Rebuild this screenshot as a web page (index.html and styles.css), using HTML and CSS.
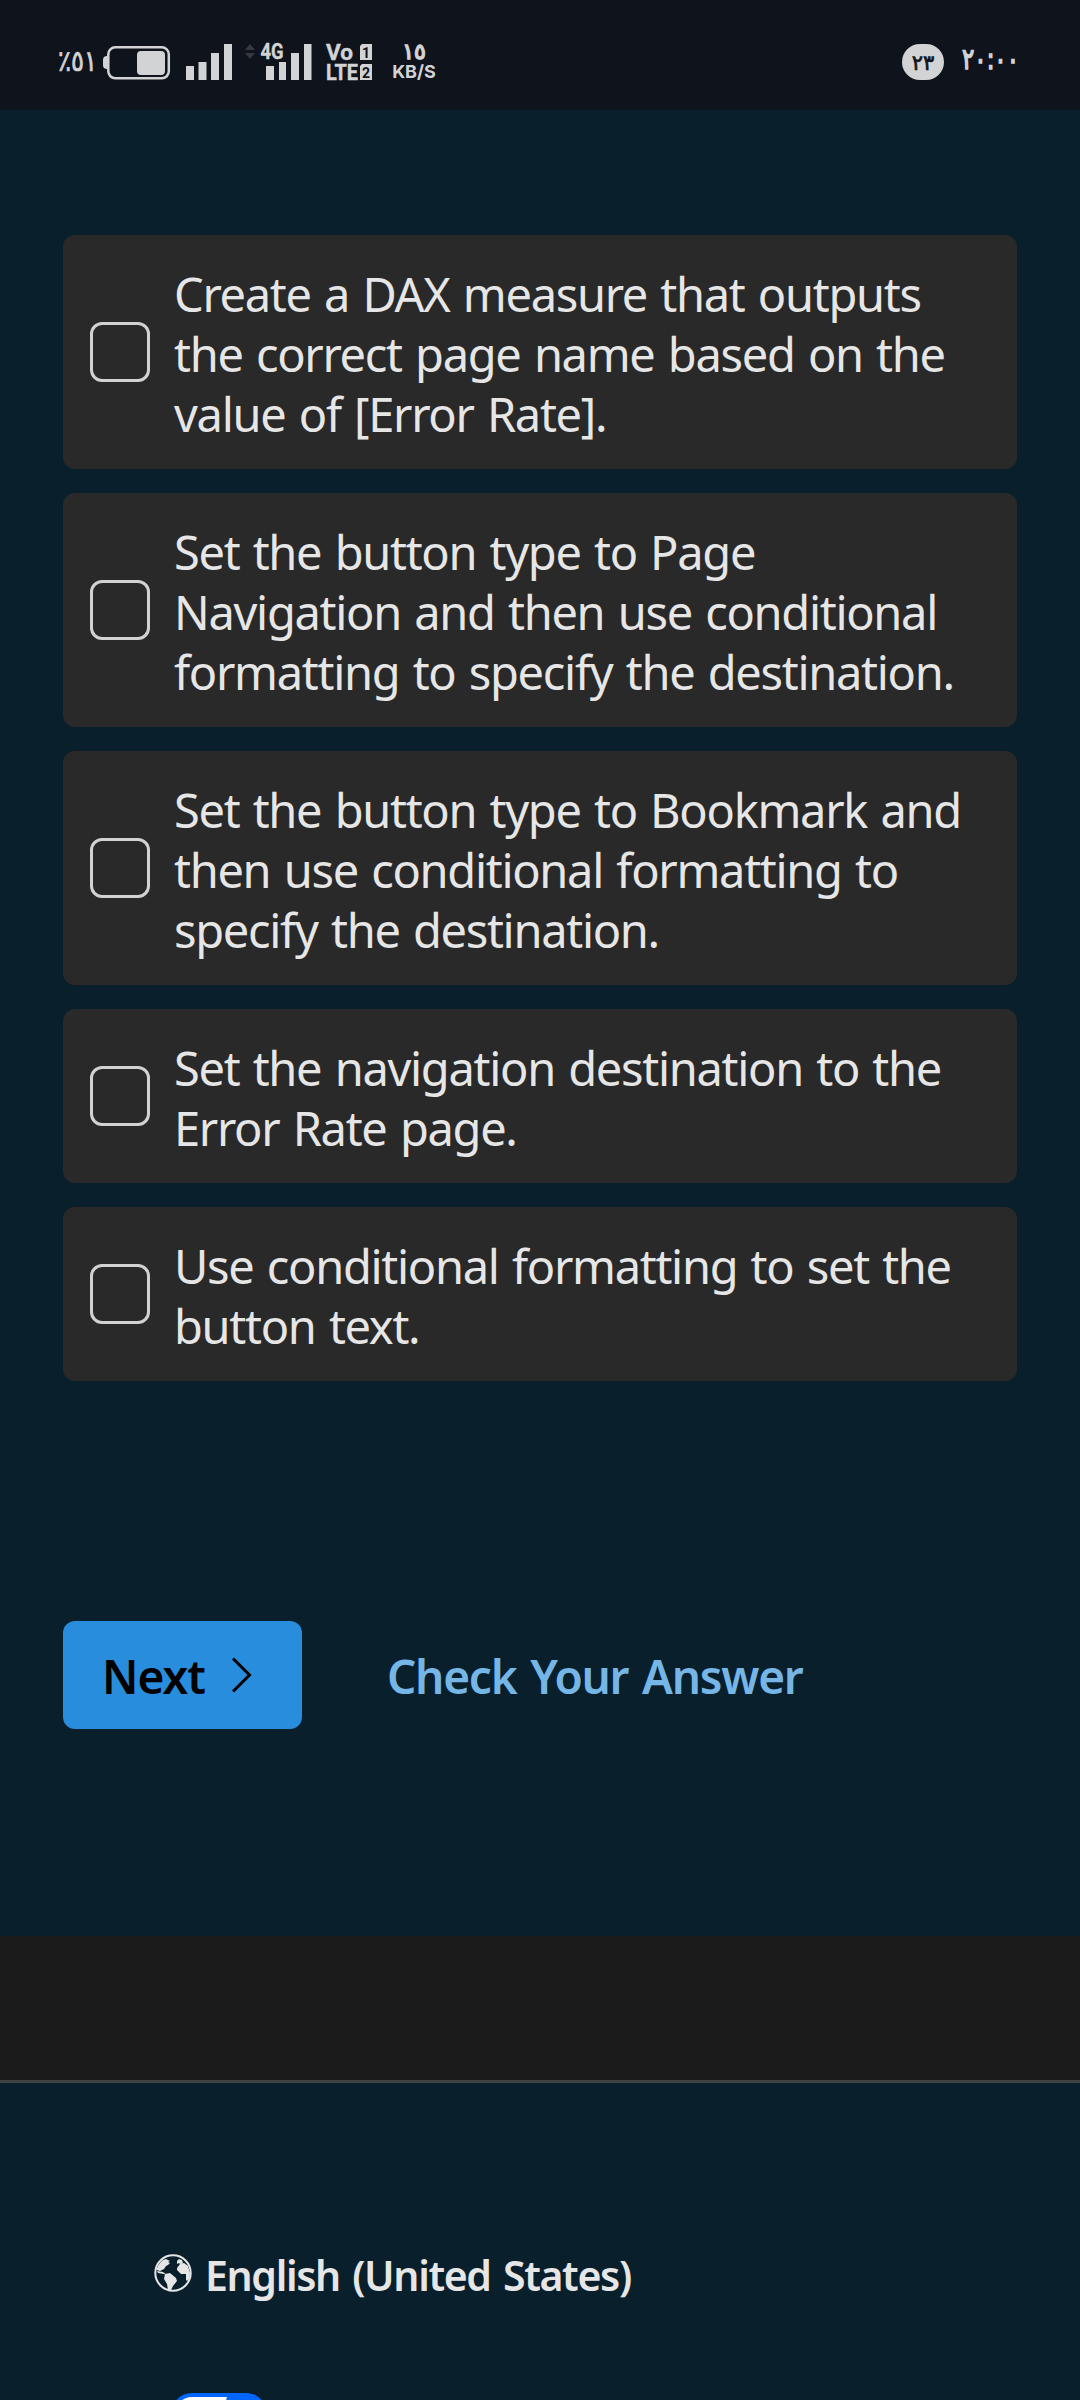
FILE: index.html
```html
<!DOCTYPE html>
<html lang="en">
<head>
<meta charset="utf-8">
<title>Practice assessment</title>
<link rel="stylesheet" href="styles.css">
</head>
<body>
<header class="status">
  <div class="status-left">
    <svg class="battery-text" width="45" height="36" viewBox="0 0 45 36"><text class="digits thin" x="0" y="27" textLength="39" lengthAdjust="spacingAndGlyphs">٪٥١</text></svg>
    <svg class="battery" width="68" height="36" viewBox="0 0 68 36"><path class="fill" d="M5 11v13H4q-4 0-4-4v-5q0-4 4-4z"/><rect class="outline" x="5.300" y="2.300" width="60.500" height="31" rx="7"/><rect class="fill" x="34" y="6" width="28" height="24" rx="4"/></svg>
    <svg class="signal" width="46" height="36" viewBox="0 0 46 36"><path class="fill" d="M0 22h8v14H0zM12.500 18h8v18h-8zM25 9h8v27h-8zM38 0h8v36h-8z"/></svg>
    <svg class="signal mobile" width="68" height="38" viewBox="0 0 68 38"><path class="dim" d="M0 8l5-6 5 6zM0 11l5 6 5-6z"/><text class="net" x="15.500" y="17" textLength="23" lengthAdjust="spacingAndGlyphs">4G</text><path class="fill" d="M21 24h8v14h-8zM34 20h7v18h-7zM46 11h8v27h-8zM59 2h7.500v36H59z"/></svg>
    <svg class="volte" width="46" height="38" viewBox="0 0 46 38"><text class="net" x="0" y="17.500" textLength="27" lengthAdjust="spacingAndGlyphs">Vo</text><text class="net" x="0" y="37.500" textLength="32" lengthAdjust="spacingAndGlyphs">LTE</text><path class="fill" d="M36 2h10v16H34V4zM36 22h10v16H34V24z"/><text class="sim" x="36" y="15.500">1</text><text class="sim" x="36" y="35.500">2</text></svg>
    <div class="speed"><span class="speed-value">١٥</span><span class="speed-unit">KB/S</span></div>
  </div>
  <div class="status-right">
    <span class="badge">٢٣</span>
    <svg class="clock" width="52" height="36" viewBox="0 0 52 36"><text class="digits" x="-2" y="26" textLength="57" lengthAdjust="spacingAndGlyphs">٢٠:٠٠</text></svg>
  </div>
</header>
<main class="quiz">
  <ul class="answers">
    <li class="answer"><span class="box"></span><p class="label"><span class="line">Create a DAX measure that outputs</span><span class="line">the correct page name based on the</span><span class="line">value of [Error Rate].</span></p></li>
    <li class="answer"><span class="box"></span><p class="label"><span class="line">Set the button type to Page</span><span class="line">Navigation and then use conditional</span><span class="line">formatting to specify the destination.</span></p></li>
    <li class="answer"><span class="box"></span><p class="label"><span class="line">Set the button type to Bookmark and</span><span class="line">then use conditional formatting to</span><span class="line">specify the destination.</span></p></li>
    <li class="answer"><span class="box"></span><p class="label"><span class="line">Set the navigation destination to the</span><span class="line">Error Rate page.</span></p></li>
    <li class="answer"><span class="box"></span><p class="label"><span class="line">Use conditional formatting to set the</span><span class="line">button text.</span></p></li>
  </ul>
  <div class="actions">
    <button class="next"><span class="next-text">Next</span><svg width="22" height="36" viewBox="0 0 22 36"><path class="chevron" d="M2 1.500L18.500 18 2 34.500"/></svg></button>
    <a class="check">Check Your Answer</a>
  </div>
</main>
<div class="band"></div>
<footer class="footer">
  <a class="locale"><svg class="globe" width="38" height="38" viewBox="0 0 38 38"><circle class="ring" cx="19" cy="19" r="17.700"/><path class="land" d="M2.500 16Q4 10 9 6l3-1 4 2-2 1 2 1-2 2-2 1-2 3-4 2zM23 7l2-2 3 1 1 3-3 1-1-1-2 1zM23 14l3-4 4-1 4 3 2 7q0 6-3 8l-1-1 0-6-5 0-4-4zM3 17l6 1 4 3-3-1-6-1zM11 20l5-1 6 5 1 3-4 5-2 4-3 0-1-6-3-5z"/></svg><span class="locale-text">English (United States)</span></a>
  <svg class="privacy" width="96" height="42" viewBox="0 0 96 42"><rect class="pill" width="96" height="42" rx="21"/><path class="pill-half" d="M56 4H21a17 17 0 0 0 0 34h25z"/></svg>
</footer>
</body>
</html>
```
FILE: styles.css
```css
* { box-sizing: border-box; }
body { margin: 0; width: 1080px; height: 2400px; overflow: hidden; background: #091f2b; color: #e6e6e6; font-family: "Noto Sans", sans-serif; }
svg { overflow: visible; flex: none; }
.status { height: 110px; background: #0f141c; color: #d2d3d5; display: flex; justify-content: space-between; padding: 0 64px 0 58px; }
.status-left { display: flex; align-items: flex-start; }
.status-right { display: flex; align-items: flex-start; }
.fill { fill: #d2d3d5; }
.dim { fill: #36393f; }
.outline { fill: none; stroke: #d2d3d5; stroke-width: 2.5; }
.digits { font: 29px "DejaVu Sans", sans-serif; fill: #d2d3d5; stroke: #d2d3d5; stroke-width: 1.5px; direction: ltr; unicode-bidi: bidi-override; }
.thin { stroke-width: .7px; }
.battery-text { margin-top: 44px; }
.battery { margin-top: 45px; }
.signal { margin: 44px 0 0 15px; }
.signal.mobile { margin: 42px 0 0 13px; }
.volte { margin: 42px 0 0 13px; }
.net { font: 700 22px Roboto, sans-serif; fill: #d2d3d5; stroke: #d2d3d5; stroke-width: .4px; }
.sim { font: 700 14px Roboto, sans-serif; fill: #0f141c; }
.speed { margin: 42px 0 0 20px; width: 44px; display: flex; flex-direction: column; align-items: center; }
.speed-value { font: 22px/20px "DejaVu Sans", sans-serif; letter-spacing: -2px; -webkit-text-stroke: 1.4px #d2d3d5; }
.speed-unit { font: 700 18px/19px Inter, sans-serif; }
.badge { width: 42px; height: 36px; margin: 44px 20px 0 0; border-radius: 18px; background: #d2d3d5; color: #0f141c; text-align: center; font: 21px/38px "DejaVu Sans", sans-serif; letter-spacing: -1.500px; -webkit-text-stroke: .7px #0f141c; }
.clock { margin-top: 43px; }
.quiz { height: 1826px; padding: 125px 63px 0; }
.answers { list-style: none; margin: 0; padding: 0; display: flex; flex-direction: column; gap: 24px; }
.answer { display: flex; align-items: center; gap: 24px; padding: 27px; border-radius: 12px; background: #292929; }
.box { flex: none; width: 60px; height: 60px; border: 3px solid #d2d2d2; border-radius: 12px; }
.label { margin: 0; padding-top: 2px; margin-bottom: -2px; font-size: 47px; line-height: 60px; letter-spacing: -1.300px; word-spacing: 2.400px; }
.line { display: block; white-space: nowrap; }
.actions { margin-top: 240px; display: flex; align-items: center; }
.next { width: 239px; height: 108px; padding: 0 49px 0 39px; border: 0; border-radius: 12px; background: #288ddc; display: flex; align-items: center; justify-content: space-between; font: 600 46px/60px "Noto Sans", sans-serif; letter-spacing: -1px; color: #000; }
.next-text { padding-top: 2px; }
.chevron { fill: none; stroke: #000; stroke-width: 3; }
.check { margin-left: 85px; padding-top: 2px; font-weight: 600; font-size: 46px; line-height: 60px; letter-spacing: -1.250px; word-spacing: 3px; color: #75b6e7; white-space: nowrap; }
.band { height: 147px; background: #1b1b1b; border-bottom: 3px solid #424242; }
.footer { padding: 160px 0 0 154px; }
.locale { display: flex; align-items: center; gap: 13px; height: 60px; font-weight: 600; font-size: 41px; line-height: 60px; letter-spacing: -1.350px; word-spacing: 3px; white-space: nowrap; }
.locale-text { padding-top: 4px; }
.ring { fill: none; stroke: #e6e6e6; stroke-width: 2; }
.land { fill: #e6e6e6; }
.privacy { display: block; margin: 90px 0 0 17px; }
.pill { fill: #06f; }
.pill-half { fill: #fff; }
```
